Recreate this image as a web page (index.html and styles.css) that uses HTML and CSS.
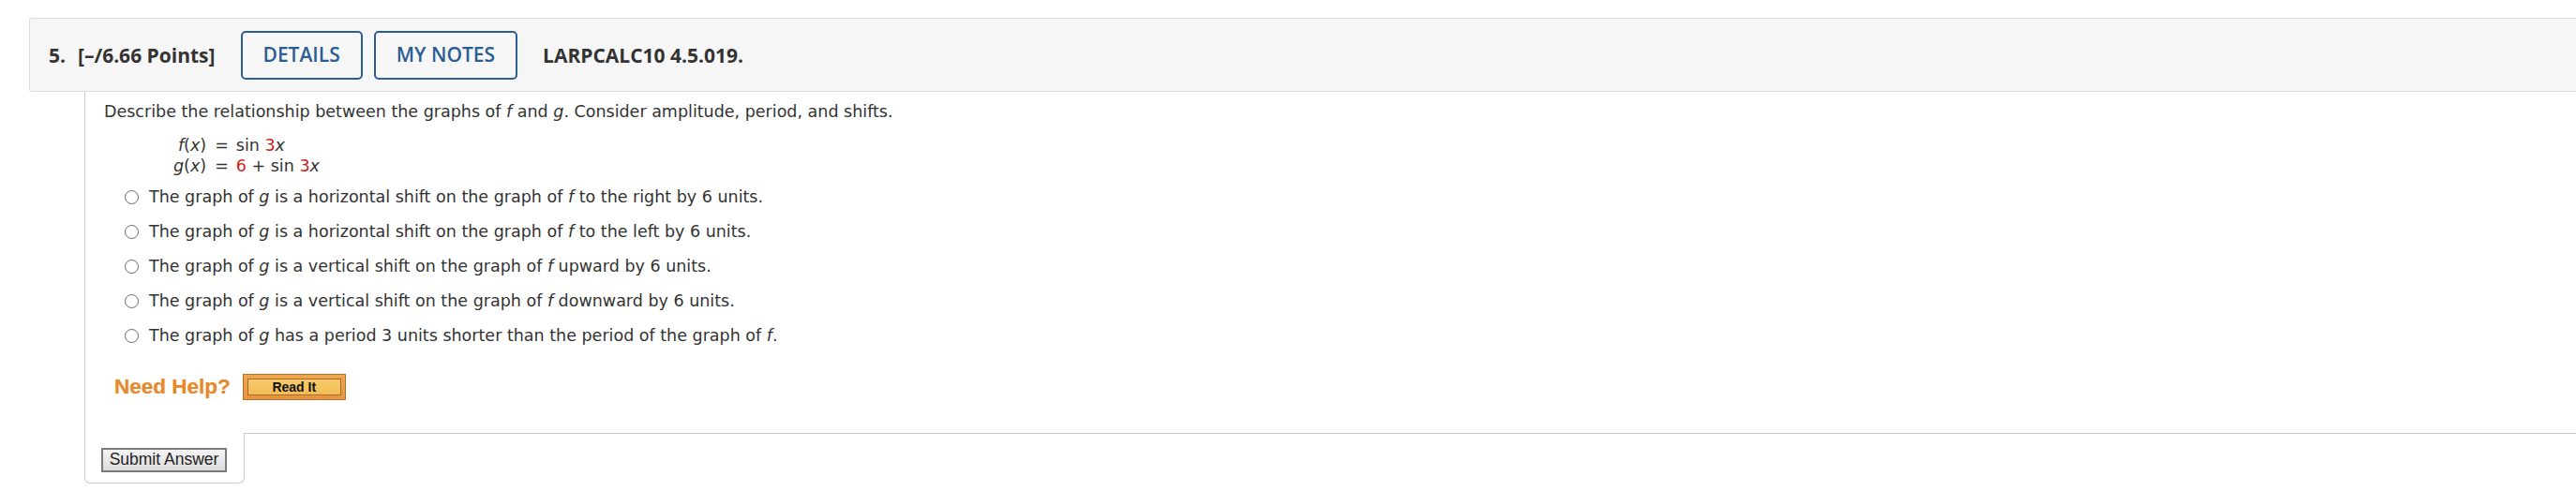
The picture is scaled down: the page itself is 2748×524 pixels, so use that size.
FILE: index.html
```html
<!DOCTYPE html>
<html lang="en">
<head>
<meta charset="utf-8">
<title>Question 5</title>
<link rel="stylesheet" href="styles.css">
</head>
<body>
<div class="page">
  <div class="qhead">
    <span class="qnum">5.</span>
    <span class="qpts">[–/6.66 Points]</span>
    <button class="hbtn hbtn-first" type="button">DETAILS</button>
    <button class="hbtn" type="button">MY NOTES</button>
    <span class="qref">LARPCALC10 4.5.019.</span>
  </div>
  <div class="qbody">
    <div class="qcontent">
      <p class="prompt">Describe the relationship between the graphs of <i>f</i> and <i>g</i>. Consider amplitude, period, and shifts.</p>
      <div class="eqs">
        <span class="lhs"><i>f</i>(<i>x</i>)</span><span class="eq">=</span><span class="rhs">sin <span class="red">3</span><i>x</i></span>
        <span class="lhs"><i>g</i>(<i>x</i>)</span><span class="eq">=</span><span class="rhs"><span class="red">6</span> + sin <span class="red">3</span><i>x</i></span>
      </div>
      <ul class="choices">
        <li><span class="radio"></span><span>The graph of <i>g</i> is a horizontal shift on the graph of <i>f</i> to the right by 6 units.</span></li>
        <li><span class="radio"></span><span>The graph of <i>g</i> is a horizontal shift on the graph of <i>f</i> to the left by 6 units.</span></li>
        <li><span class="radio"></span><span>The graph of <i>g</i> is a vertical shift on the graph of <i>f</i> upward by 6 units.</span></li>
        <li><span class="radio"></span><span>The graph of <i>g</i> is a vertical shift on the graph of <i>f</i> downward by 6 units.</span></li>
        <li><span class="radio"></span><span>The graph of <i>g</i> has a period 3 units shorter than the period of the graph of <i>f</i>.</span></li>
      </ul>
      <div class="help">
        <span class="help-label">Need Help?</span>
        <button class="readit" type="button"><span class="readit-inner">Read It</span></button>
      </div>
    </div>
    <div class="qfoot">
      <div class="submit-tab"><button class="submit" type="button">Submit Answer</button></div>
      <div class="foot-fill"></div>
    </div>
  </div>
</div>
</body>
</html>
```
FILE: styles.css
```css
html, body {
  margin: 0;
  padding: 0;
  background: #ffffff;
}
body {
  overflow: hidden;
}
.page {
  padding: 19px 0 0 31px;
}

/* Header bar */
.qhead {
  box-sizing: border-box;
  height: 79px;
  display: flex;
  align-items: center;
  padding-left: 20px;
  background: #f6f6f6;
  border: 1px solid #dcdcdc;
  border-right: none;
  border-radius: 3px 0 0 3px;
  font-family: "Open Sans", "Liberation Sans", sans-serif;
  font-size: 21px;
  color: #333333;
}
.qnum, .qpts, .qref {
  font-weight: 700;
  white-space: nowrap;
}
.qnum {
  margin-right: 13px;
}
.hbtn {
  box-sizing: border-box;
  height: 52px;
  padding: 0 22px;
  margin-left: 12px;
  background: transparent;
  border: 2px solid #2b5e94;
  border-radius: 5px;
  font-family: "Open Sans", "Liberation Sans", sans-serif;
  font-size: 21px;
  font-weight: 600;
  color: #2b5d93;
  line-height: 1;
}
.hbtn-first {
  margin-left: 27px;
}
.qref {
  margin-left: 27px;
}

/* Question body */
.qbody {
  margin-left: 59px;
}
.qcontent {
  border-left: 1px solid #cccccc;
  padding: 10px 0 35px 20px;
  font-family: "DejaVu Sans", Verdana, sans-serif;
  font-size: 17.5px;
  line-height: 22px;
  color: #333333;
}
.prompt {
  margin: 0;
}
.red {
  color: #d0201a;
}
.eqs {
  display: grid;
  grid-template-columns: auto auto auto;
  justify-content: start;
  margin: 14px 0 0 74px;
}
.lhs {
  text-align: right;
}
.eq {
  padding: 0 8px 0 9px;
}
.choices {
  list-style: none;
  margin: 11px 0 0 0;
  padding: 0 0 0 22px;
  display: flex;
  flex-direction: column;
  gap: 15px;
}
.choices li {
  display: flex;
  align-items: center;
  gap: 11px;
}
.radio {
  box-sizing: border-box;
  width: 15px;
  height: 15px;
  border: 1.5px solid #666666;
  border-radius: 50%;
  background: #ffffff;
  flex: none;
}

/* Need help */
.help {
  display: flex;
  align-items: center;
  margin: 30px 0 0 11px;
  gap: 13px;
}
.help-label {
  font-family: "Liberation Sans", Arial, sans-serif;
  font-weight: 700;
  font-size: 22.5px;
  color: #e5892c;
  text-shadow: 0 0 1px rgba(229, 137, 44, 0.5);
}
.readit {
  box-sizing: border-box;
  width: 110px;
  height: 28px;
  padding: 4px 4px;
  border: 1px solid #b76e2a;
  background: linear-gradient(#f0a54e, #e6943d);
  display: flex;
}
.readit-inner {
  box-sizing: border-box;
  flex: 1;
  border: 1px solid #a8692e;
  background: linear-gradient(#f7cb6a, #f2bc56);
  font-family: "Liberation Sans", Arial, sans-serif;
  font-weight: 700;
  font-size: 14px;
  line-height: 16px;
  color: #111111;
  text-align: center;
}

/* Footer */
.qfoot {
  display: flex;
}
.submit-tab {
  box-sizing: border-box;
  width: 171px;
  height: 54px;
  padding: 16px 0 0 17px;
  border: 1px solid #cccccc;
  border-top: none;
  border-radius: 0 0 6px 6px;
}
.foot-fill {
  flex: 1;
  border-top: 1px solid #cccccc;
}
.submit {
  box-sizing: border-box;
  width: 134px;
  height: 26px;
  padding: 0;
  border: 2px solid #7a7a7a;
  background: linear-gradient(#f4f4f4, #dcdcdc);
  font-family: "Liberation Sans", Arial, sans-serif;
  font-size: 17.5px;
  color: #222222;
  line-height: 1;
}
```
